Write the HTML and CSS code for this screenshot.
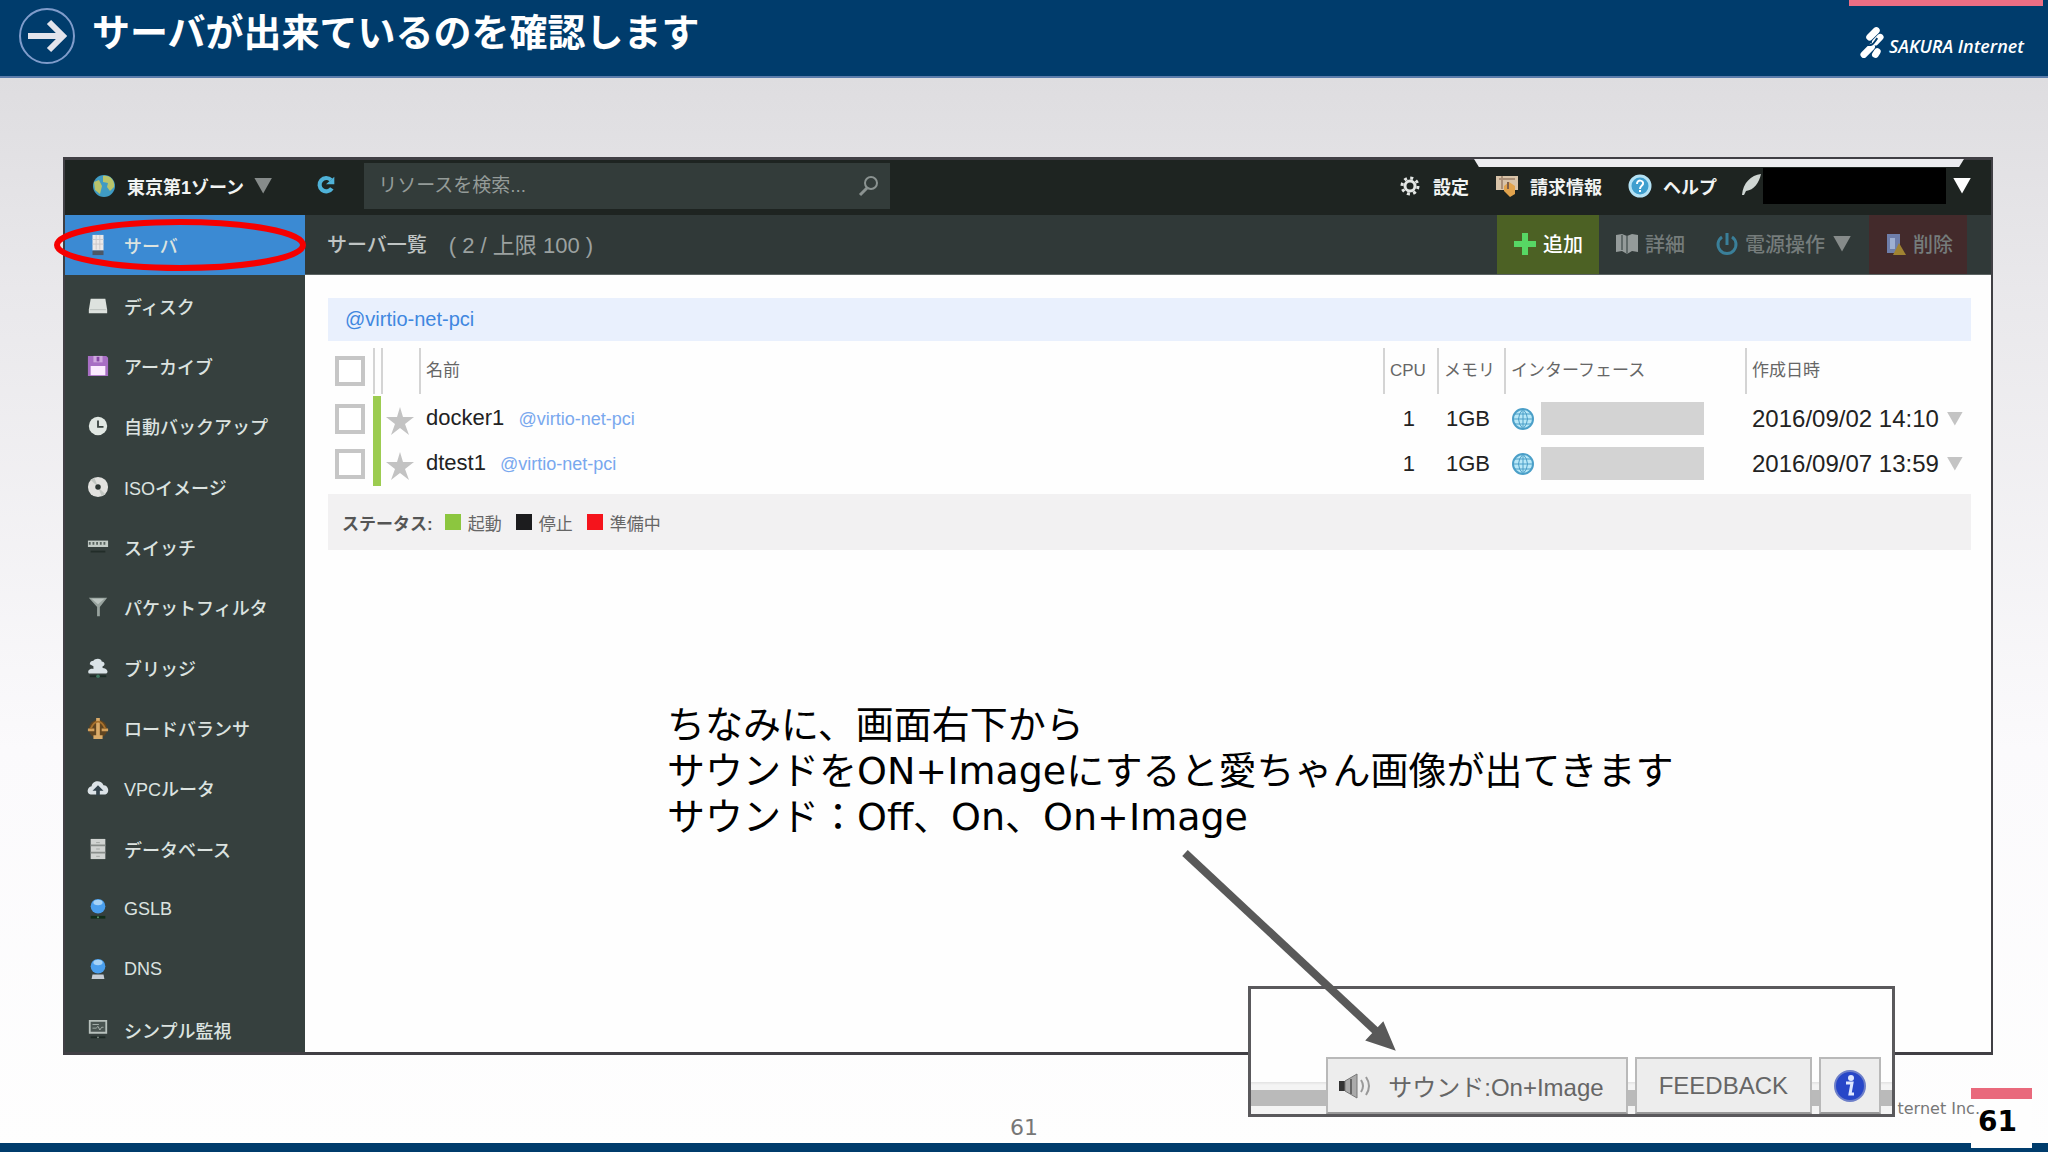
FILE: index.html
```html
<!DOCTYPE html>
<html lang="ja">
<head>
<meta charset="utf-8">
<meta name="viewport" content="width=device-width, initial-scale=1">
<title>サーバが出来ているのを確認します</title>
<link rel="stylesheet" href="styles.css">
</head>
<body>
<div class="slide">
  <header class="slide-header">
    <svg class="title-icon" viewBox="0 0 58 58" aria-hidden="true">
      <circle cx="29" cy="29" r="27" fill="none" stroke="#7f9ccb" stroke-width="2"/>
      <path d="M10 29H44M31 15L45 29L31 43" fill="none" stroke="#e3e4ec" stroke-width="6"/>
    </svg>
    <h1 class="title">サーバが出来ているのを確認します</h1>
    <div class="brand">
      <svg class="brand-mark" viewBox="0 0 26 34" aria-hidden="true">
        <g stroke="#fff" stroke-width="7" stroke-linecap="round">
          <path d="M10 11L17 4"/><path d="M16 16L21 11"/><path d="M4 29L12 21"/><path d="M16 29L18 26"/>
        </g>
        <path d="M7 19C14 20 14 17 18 12" fill="none" stroke="#003c6c" stroke-width="2"/>
      </svg>
      <span>SAKURA Internet</span>
    </div>
  </header>

  <main class="console">
    <div class="topbar">
      <button class="zone" type="button">
        <svg class="ico" viewBox="0 0 24 24"><circle cx="12" cy="12" r="11" fill="#3f9bc4"/><path d="M11 2C18 1 23 6 22 13L18 17L15 13L16 9L11 8ZM2 8L7 6L10 12L8 20L3 16Z" fill="#b9c46a"/></svg>
        <span>東京第1ゾーン</span><i class="tri dim"></i>
      </button>
      <button class="reload" type="button" aria-label="更新">
        <svg class="ico" viewBox="0 0 24 24"><path d="M19 16A8 8 0 1 1 18 6" fill="none" stroke="#4fb2d8" stroke-width="5"/><path d="M22 2V11H12Z" fill="#4fb2d8"/></svg>
      </button>
      <div class="search">
        <input type="text" placeholder="リソースを検索..." aria-label="リソースを検索">
        <svg class="ico" viewBox="0 0 24 24"><circle cx="15" cy="9" r="6" fill="none" stroke="#8b9391" stroke-width="2"/><path d="M11 14L4 21" stroke="#8b9391" stroke-width="3"/></svg>
      </div>
      <nav class="account">
        <a href="#"><svg class="ico" viewBox="0 0 24 24"><circle cx="12" cy="12" r="5" fill="none" stroke="#e3e6e4" stroke-width="3"/><circle cx="12" cy="12" r="8" fill="none" stroke="#e3e6e4" stroke-width="3" stroke-dasharray="3 3.280"/></svg>設定</a>
        <a href="#"><svg class="ico" viewBox="0 0 24 24"><path d="M1 2H23V16H1Z" fill="#d8c3a8"/><path d="M4 5H20M7 2V15" stroke="#a98f78" stroke-width="2"/><path d="M9 12L14 8L20 12V20L15 23L9 17Z" fill="#e1a34d"/><path d="M13 8V15" stroke="#80604a" stroke-width="2"/></svg>請求情報</a>
        <a href="#"><svg class="ico" viewBox="0 0 24 24"><circle cx="12" cy="12" r="10" fill="#3f9fcf" stroke="#b4e2f5" stroke-width="3"/><path d="M9 10C9 5 16 6 15 10C14 12 12 12 12 15M12 16V18" fill="none" stroke="#fff" stroke-width="2"/></svg>ヘルプ</a>
        <button class="user" type="button" aria-label="アカウント">
          <svg class="ico" viewBox="0 0 24 24"><path d="M22 0C12 1 4 9 3 21L5 21L7 17C15 16 20 9 22 0Z" fill="#cfd6d3"/></svg>
          <span class="mask"></span><i class="tri"></i>
        </button>
      </nav>
    </div>

    <nav class="sidebar">
      <ul>
        <li><a class="current" href="#"><svg class="ico" viewBox="0 0 24 24"><path d="M6 1H18V18H6Z" fill="#ece9e8"/><path d="M6 6H18M6 11H18M10 1V17M14 1V17" stroke="#c9c6c8"/><path d="M6 18H18V23H6Z" fill="#4c5765"/></svg>サーバ</a></li>
        <li><a href="#"><svg class="ico" viewBox="0 0 24 24"><path d="M4 4H20L22 16V20H2V16Z" fill="#dde2de"/><path d="M3 16H21" stroke="#b8beb9"/></svg>ディスク</a></li>
        <li><a href="#"><svg class="ico" viewBox="0 0 24 24"><path d="M1 1H21L23 3V23H1Z" fill="#a86fc4"/><path d="M7 1H17V8H7Z" fill="#cfa8df"/><path d="M12 2V7" stroke="#8647a5" stroke-width="3"/><path d="M4 12H20V22H4Z" fill="#fcecff"/></svg>アーカイブ</a></li>
        <li><a href="#"><svg class="ico" viewBox="0 0 24 24"><circle cx="12" cy="12" r="10" fill="#e1e8e3"/><path d="M12 6V13H18" fill="none" stroke="#3a4542" stroke-width="2"/></svg>自動バックアップ</a></li>
        <li><a href="#"><svg class="ico" viewBox="0 0 24 24"><circle cx="12" cy="12" r="11" fill="#e2e2df"/><path d="M12 12L4 4L8 2ZM12 12L20 20L16 22Z" fill="#c2c7c2"/><circle cx="12" cy="12" r="3" fill="#2b3532"/></svg>ISOイメージ</a></li>
        <li><a href="#"><svg class="ico" viewBox="0 0 24 24"><path d="M1 5H23V12H1Z" fill="#c3ccc7"/><path d="M2 8H22" stroke="#58635f" stroke-width="3" stroke-dasharray="2 2"/><path d="M4 17H20" stroke="#222d29" stroke-width="2"/></svg>スイッチ</a></li>
        <li><a href="#"><svg class="ico" viewBox="0 0 24 24"><path d="M2 2H22L14 12V22H11V12Z" fill="#98a39e"/><path d="M5 3H19L12 9Z" fill="#bcc5c1"/></svg>パケットフィルタ</a></li>
        <li><a href="#"><svg class="ico" viewBox="0 0 24 24"><path d="M3 8C3 5 5 4 7 4C9 1 16 1 16 5C20 5 20 10 17 10V12C22 12 24 17 21 18H2C0 15 3 12 7 13V10Z" fill="#dae3e7"/><path d="M3 21H21" stroke="#1b2c26" stroke-width="2"/><circle cx="12" cy="21" r="2" fill="#3d7760"/></svg>ブリッジ</a></li>
        <li><a href="#"><svg class="ico" viewBox="0 0 24 24"><circle cx="12" cy="13" r="10" fill="#604521"/><path d="M12 1V22M7 22H17" stroke="#dbab68" stroke-width="4"/><path d="M1 14H8M16 14H23" stroke="#d3a05b" stroke-width="3"/><path d="M12 5C8 5 6 8 4 13M12 5C16 5 18 8 20 13" fill="none" stroke="#a8712c" stroke-width="2"/></svg>ロードバランサ</a></li>
        <li><a href="#"><svg class="ico" viewBox="0 0 24 24"><path d="M4 19C-1 18 0 11 5 10C6 3 16 3 18 9C24 9 25 18 20 19Z" fill="#dce3e7"/><path d="M12 9L18 15H14V20H10V15H6Z" fill="#33434c"/></svg>VPCルータ</a></li>
        <li><a href="#"><svg class="ico" viewBox="0 0 24 24"><path d="M4 1H20V23H4Z" fill="#d0d3d1"/><path d="M4 8H20M4 16H20" stroke="#888d8a" stroke-width="2"/><path d="M10 5H14M10 12H14M10 20H14" stroke="#a0a4a1"/></svg>データベース</a></li>
        <li><a href="#"><svg class="ico" viewBox="0 0 24 24"><circle cx="12" cy="9" r="8" fill="#4a9fee"/><ellipse cx="12" cy="5" rx="5" ry="3" fill="#a5d3f8"/><path d="M4 21H20" stroke="#112d18" stroke-width="3"/><circle cx="12" cy="21" r="1" fill="#65a176"/></svg>GSLB</a></li>
        <li><a href="#"><svg class="ico" viewBox="0 0 24 24"><path d="M6 18H18L19 23H5Z" fill="#c6ccd4"/><circle cx="12" cy="9" r="8" fill="#4a9fee"/><ellipse cx="12" cy="5" rx="5" ry="3" fill="#a5d3f8"/></svg>DNS</a></li>
        <li><a href="#"><svg class="ico" viewBox="0 0 24 24"><path d="M3 2H21V15H3Z" fill="#4a5552" stroke="#b7c0bc" stroke-width="2"/><path d="M6 6H13M6 10H10L12 8L14 12L16 9H18" fill="none" stroke="#a8b2ae"/><path d="M4 20H20" stroke="#1d2925" stroke-width="2"/><circle cx="12" cy="20" r="1" fill="#89958f"/></svg>シンプル監視</a></li>
      </ul>
    </nav>

    <div class="toolbar">
      <h2>サーバ一覧</h2><span class="count">( 2 / 上限 100 )</span>
      <div class="actions">
        <button class="act add" type="button"><svg class="ico" viewBox="0 0 24 24"><path d="M9 1H15V9H23V15H15V23H9V15H1V9H9Z" fill="#57d764"/></svg>追加</button>
        <button class="act" type="button"><svg class="ico" viewBox="0 0 24 24"><path d="M1 3L7 2L12 4L17 2L23 3V20L17 19L12 22L7 19L1 20Z" fill="#949b9a"/><path d="M12 4V22M7 3V18" stroke="#606a69" stroke-width="2"/></svg>詳細</button>
        <button class="act" type="button"><svg class="ico" viewBox="0 0 24 24"><path d="M7 5A9 9 0 1 0 17 5M12 1V13" fill="none" stroke="#3a7f99" stroke-width="3"/></svg>電源操作<i class="tri dim"></i></button>
        <button class="act del" type="button"><svg class="ico" viewBox="0 0 24 24"><path d="M4 2H17V21H4Z" fill="#6e7eaa"/><path d="M7 6H12V17H7Z" fill="#9eb0d1"/><path d="M16 11L23 23H10Z" fill="#a08332"/></svg>削除</button>
      </div>
    </div>

    <section class="content">
      <div class="tag-band"><a href="#">@virtio-net-pci</a></div>
      <table class="servers">
        <colgroup><col class="c-check"><col class="c-bar"><col class="c-star"><col><col class="c-cpu"><col class="c-mem"><col class="c-if"><col class="c-date"></colgroup>
        <thead>
          <tr><th><input type="checkbox" aria-label="すべて選択"></th><th class="sep"></th><th class="sep"></th><th class="sep">名前</th><th class="sep">CPU</th><th class="sep">メモリ</th><th class="sep">インターフェース</th><th class="sep">作成日時</th></tr>
        </thead>
        <tbody>
          <tr>
            <td><input type="checkbox" aria-label="docker1"></td><td class="up"></td>
            <td class="star"><svg viewBox="0 0 30 30"><path d="M15 1L18 11H29L20 18L24 29L15 22L6 29L10 18L1 11H12Z" fill="#c3c3c3"/></svg></td>
            <td>docker1 <a class="tag" href="#">@virtio-net-pci</a></td><td class="num">1</td><td class="num">1GB</td>
            <td><div class="iface"><svg class="ico" viewBox="0 0 24 24"><circle cx="12" cy="12" r="10" fill="#b9e8f7" stroke="#4b9fc8" stroke-width="2"/><path d="M12 2V22M2 12H22M4 7H20M4 17H20M12 2Q3 12 12 22M12 2Q21 12 12 22" fill="none" stroke="#4b9fc8"/></svg><span class="addr"></span></div></td>
            <td><div class="date">2016/09/02 14:10<i class="tri pale"></i></div></td>
          </tr>
          <tr>
            <td><input type="checkbox" aria-label="dtest1"></td><td class="up"></td>
            <td class="star"><svg viewBox="0 0 30 30"><path d="M15 1L18 11H29L20 18L24 29L15 22L6 29L10 18L1 11H12Z" fill="#c3c3c3"/></svg></td>
            <td>dtest1 <a class="tag" href="#">@virtio-net-pci</a></td><td class="num">1</td><td class="num">1GB</td>
            <td><div class="iface"><svg class="ico" viewBox="0 0 24 24"><circle cx="12" cy="12" r="10" fill="#b9e8f7" stroke="#4b9fc8" stroke-width="2"/><path d="M12 2V22M2 12H22M4 7H20M4 17H20M12 2Q3 12 12 22M12 2Q21 12 12 22" fill="none" stroke="#4b9fc8"/></svg><span class="addr"></span></div></td>
            <td><div class="date">2016/09/07 13:59<i class="tri pale"></i></div></td>
          </tr>
        </tbody>
      </table>
      <div class="legend">
        <strong>ステータス:</strong>
        <span class="state"><i class="box run"></i>起動</span>
        <span class="state"><i class="box stop"></i>停止</span>
        <span class="state"><i class="box prep"></i>準備中</span>
      </div>
    </section>
  </main>

  <footer class="slide-footer">
    <span class="page-center">61</span>
    <span class="company">ternet Inc.</span>
  </footer>

  <div class="pink-tab"></div>
  <div class="window-edge"></div>
  <div class="page-badge">61</div>
  <p class="note">ちなみに、画面右下から<br>サウンドをON+Imageにすると愛ちゃん画像が出てきます<br>サウンド：Off、On、On+Image</p>
  <div class="callout">
    <button class="tab sound" type="button"><svg viewBox="0 0 34 28"><path d="M1 9H7V19H1Z" fill="#333"/><path d="M7 9L19 2V26L7 19Z" fill="#aaa" stroke="#777"/><path d="M13 7V22" stroke="#666" stroke-width="2"/><path d="M23 8Q27 14 23 20M28 5Q34 14 28 23" fill="none" stroke="#999" stroke-width="2"/></svg>サウンド:On+Image</button>
    <button class="tab" type="button">FEEDBACK</button>
    <button class="tab info" type="button" aria-label="情報"><svg viewBox="0 0 32 32"><circle cx="16" cy="16" r="15" fill="#2746c8" stroke="#6d7fc9" stroke-width="2"/><circle cx="17" cy="8" r="3" fill="#dfe7ff"/><path d="M12 13H18L16 24H20" fill="none" stroke="#dfe7ff" stroke-width="3"/></svg></button>
  </div>
  <svg class="ring" viewBox="0 0 252 52" aria-hidden="true"><ellipse cx="126" cy="26" rx="123" ry="23" fill="none" stroke="#f60000" stroke-width="6"/></svg>
  <svg class="pointer" viewBox="0 0 220 206" aria-hidden="true"><path d="M5 5L198 185" stroke="#595959" stroke-width="8"/><path d="M214 201L187 192L203 175Z" fill="#595959" stroke="#595959" stroke-width="2"/></svg>
</div>
</body>
</html>
```

FILE: styles.css
```css
* { box-sizing: border-box; }

body {
  margin: 0;
  font-family: "Liberation Sans", "Noto Sans CJK JP", sans-serif;
  color: #222;
}

button, input { font: inherit; color: inherit; }
button { border: 0; background: none; padding: 0; }
a { color: inherit; text-decoration: none; }

.slide {
  position: relative;
  display: flex;
  flex-direction: column;
  min-height: 100vh;
  overflow: hidden;
  background: linear-gradient(#dedde0 77px, #e9e8eb 25%, #fbfafc 65%, #fefefe);
}

/* slide header */
.slide-header {
  display: flex;
  align-items: flex-start;
  height: 78px;
  padding: 7px 24px 0 18px;
  background: #003c6c;
  border-bottom: 2px solid #5b7cab;
}
.title-icon { width: 58px; height: 58px; }
.title {
  margin: 0 0 0 16px;
  color: #fff;
  font: bold 38px/52px "DejaVu Sans", "Noto Sans CJK JP", sans-serif;
}
.brand {
  display: flex;
  align-items: center;
  gap: 4px;
  margin: 16px 0 0 auto;
  color: #fff;
  font: italic 600 18px/34px "Open Sans", sans-serif;
}
.brand span { padding-top: 6px; }
.brand-mark { width: 25px; height: 34px; }
.pink-tab {
  position: absolute;
  top: 0;
  right: 5px;
  width: 194px;
  height: 6px;
  background: #eb6e84;
}

/* control panel */
.console {
  flex: 1;
  display: grid;
  grid-template-columns: 240px 1fr;
  grid-template-rows: 55px 60px 1fr;
  margin: 79px 55px 0 63px;
  border: 3px solid #403f44;
  border-width: 3px 2px;
  background: #fefefe;
  overflow: hidden;
}
.ico { flex: none; width: 24px; height: 24px; }
.tri {
  flex: none;
  width: 18px;
  height: 16px;
  background: #fff;
  clip-path: polygon(0 0, 100% 0, 50% 100%);
}
.tri.dim { background: #868b8a; }
.tri.pale { width: 16px; height: 14px; background: #c4c4c4; }

.topbar {
  grid-column: 1 / -1;
  display: flex;
  align-items: center;
  padding: 0 20px 4px 27px;
  background: #1e2421;
  color: #f2f4f3;
  font-size: 18px;
  font-weight: bold;
}
.zone { display: flex; align-items: center; gap: 10px; font-weight: bold; }
.zone .ico { margin-right: 1px; }
.reload { width: 48px; height: 40px; margin: 0 14px 0 30px; padding-top: 4px; }
.reload .ico { width: 20px; height: 20px; }
.search {
  display: flex;
  align-items: center;
  width: 526px;
  height: 46px;
  padding: 0 10px 0 14px;
  background: #333c3a;
}
.search input {
  flex: 1;
  min-width: 0;
  border: 0;
  padding: 0;
  background: none;
  font-size: 19px;
  font-weight: 400;
}
.search input::placeholder { color: #949b98; opacity: 1; }
.account { display: flex; align-items: center; gap: 26px; margin-left: auto; }
.account a { display: flex; align-items: center; gap: 11px; }
.user { display: flex; align-items: center; margin-left: -4px; }
.mask { width: 183px; height: 36px; margin-right: 7px; background: #000; }
.window-edge {
  position: absolute;
  top: 159px;
  right: 84px;
  width: 490px;
  height: 8px;
  background: #ececef;
  clip-path: polygon(0 0, 100% 0, 99% 100%, 1% 100%);
}

.sidebar { grid-row: 2 / 4; background: #36403e; min-height: 0; }
.sidebar ul {
  display: grid;
  grid-template-rows: repeat(14, 1fr);
  height: calc(100% + 8px);
  margin: 0;
  padding: 0;
  list-style: none;
}
.sidebar a {
  display: flex;
  align-items: center;
  gap: 14px;
  height: 100%;
  padding-left: 21px;
  color: #dce3e0;
  font-size: 18px;
  font-weight: 500;
}
.sidebar .ico { width: 24px; height: 22px; }
.sidebar .current { background: #3b8ad3; }

.toolbar {
  display: flex;
  align-items: center;
  padding: 0 24px 0 22px;
  background: #303938;
  border-bottom: 1px solid #5c6463;
  color: #bfc4c3;
  font-size: 20px;
}
.toolbar h2 { margin: 0 22px 2px 0; font-size: 20px; font-weight: 500; }
.count { margin-bottom: 4px; color: #9ba1a0; font-size: 22px; }
.actions { display: flex; height: 100%; margin-left: auto; }
.act {
  display: flex;
  align-items: center;
  gap: 6px;
  padding: 0 16px 2px;
  color: #757c7b;
  font-size: 20px;
  font-weight: 500;
}
.act .tri { margin-left: 2px; }
.act.add { background: #4c6124; color: #fff; }
.act.add + .act { padding-right: 14px; }
.act.del { padding: 0 14px 2px; margin-left: 2px; background: #432a2b; }

/* server list */
.content { padding: 23px 20px 0 23px; min-width: 0; }
.tag-band {
  height: 43px;
  padding-left: 17px;
  background: #e9f0fd;
  color: #3f87e0;
  font-size: 20px;
  line-height: 43px;
}
.servers {
  width: 100%;
  table-layout: fixed;
  border-collapse: collapse;
  font-size: 22px;
  line-height: 26px;
}
.c-check { width: 45px; }
.c-bar { width: 8px; }
.c-star { width: 38px; }
.c-cpu { width: 54px; }
.c-mem { width: 67px; }
.c-if { width: 241px; }
.c-date { width: 226px; }
.servers th, .servers td { padding: 0; text-align: left; }
.servers th {
  height: 55px;
  padding: 4px 0 0 7px;
  color: #666;
  font-size: 17px;
  font-weight: 400;
  white-space: nowrap;
}
.servers td { height: 45px; padding-left: 7px; }
.servers th.sep { background: linear-gradient(#d4d4d4, #d4d4d4) left bottom 2px / 2px 46px no-repeat; }
.servers td.up { background: #9ccc50; }
.servers td.num { padding-right: 14px; padding-left: 0; text-align: right; }
.servers td.num:nth-child(5) { padding-right: 22px; }
.servers td.star { padding: 4px 0 0 4px; line-height: 0; }
.star svg { width: 30px; height: 30px; }
.servers input {
  appearance: none;
  display: block;
  width: 30px;
  height: 30px;
  margin: 0;
  border: 4px solid #c6c6c6;
  background: #fff;
}
.tag { margin-left: 8px; color: #79a8ee; font-size: 18px; }
.iface { display: flex; align-items: center; gap: 6px; }
.addr { width: 163px; height: 33px; background: #d3d3d3; }
.date { display: flex; align-items: center; gap: 8px; font-size: 24px; white-space: nowrap; }

.legend {
  display: flex;
  align-items: center;
  height: 56px;
  margin-top: 8px;
  padding-left: 14px;
  background: #f2f1f2;
  color: #666;
  font-size: 17px;
}
.legend strong { margin-right: 12px; color: #555; }
.state { display: flex; align-items: center; gap: 7px; margin-right: 14px; }
.box { width: 16px; height: 16px; }
.run { background: #8cc63f; }
.stop { background: #1c1c1e; }
.prep { background: #f5141c; }

/* slide footer */
.slide-footer {
  display: grid;
  grid-template-columns: 1fr auto 1fr;
  height: 97px;
  padding: 44px 68px 0 0;
  border-bottom: 9px solid #003c6c;
  color: #777;
  font-family: "DejaVu Sans", sans-serif;
}
.page-center { grid-column: 2; margin-top: 16px; margin-left: 68px; font-size: 22px; line-height: 26px; }
.company { position: relative; z-index: 1; justify-self: end; font-size: 16px; line-height: 20px; }
.page-badge {
  position: absolute;
  right: 16px;
  bottom: 4px;
  width: 61px;
  height: 60px;
  padding-left: 7px;
  border-top: 11px solid #e9697c;
  background: #fefefe;
  color: #000;
  font: bold 28px/46px "DejaVu Sans", sans-serif;
}

/* annotations over the panel */
.note {
  position: absolute;
  top: 702px;
  left: 667px;
  margin: 0;
  color: #000;
  font: 38px/46px "DejaVu Sans", "Noto Sans CJK JP", sans-serif;
  white-space: nowrap;
}
.callout {
  position: absolute;
  right: 153px;
  bottom: 35px;
  display: flex;
  align-items: flex-end;
  justify-content: flex-end;
  gap: 7px;
  width: 647px;
  height: 131px;
  padding-right: 11px;
  border: 3px solid #5a595c;
  background: linear-gradient(#fefefe 93px, #e2e2e2 93px, #f4f4f4 96px, #f4f4f4 101px, #bababa 101px, #bababa 117px, #f4f4f4 117px);
}
.tab {
  height: 57px;
  padding: 0 22px;
  border: 2px solid #b9b9b9;
  border-bottom-color: #999;
  background: #ededed;
  color: #666;
  font-size: 24px;
}
.sound { display: flex; align-items: center; gap: 16px; padding: 0 22px 0 10px; }
.sound svg { width: 34px; height: 28px; }
.info { padding: 0 13px; line-height: 0; }
.info svg { width: 32px; height: 32px; }
.ring { position: absolute; top: 219px; left: 54px; width: 252px; height: 52px; }
.pointer { position: absolute; right: 648px; bottom: 98px; width: 220px; height: 206px; }
```
